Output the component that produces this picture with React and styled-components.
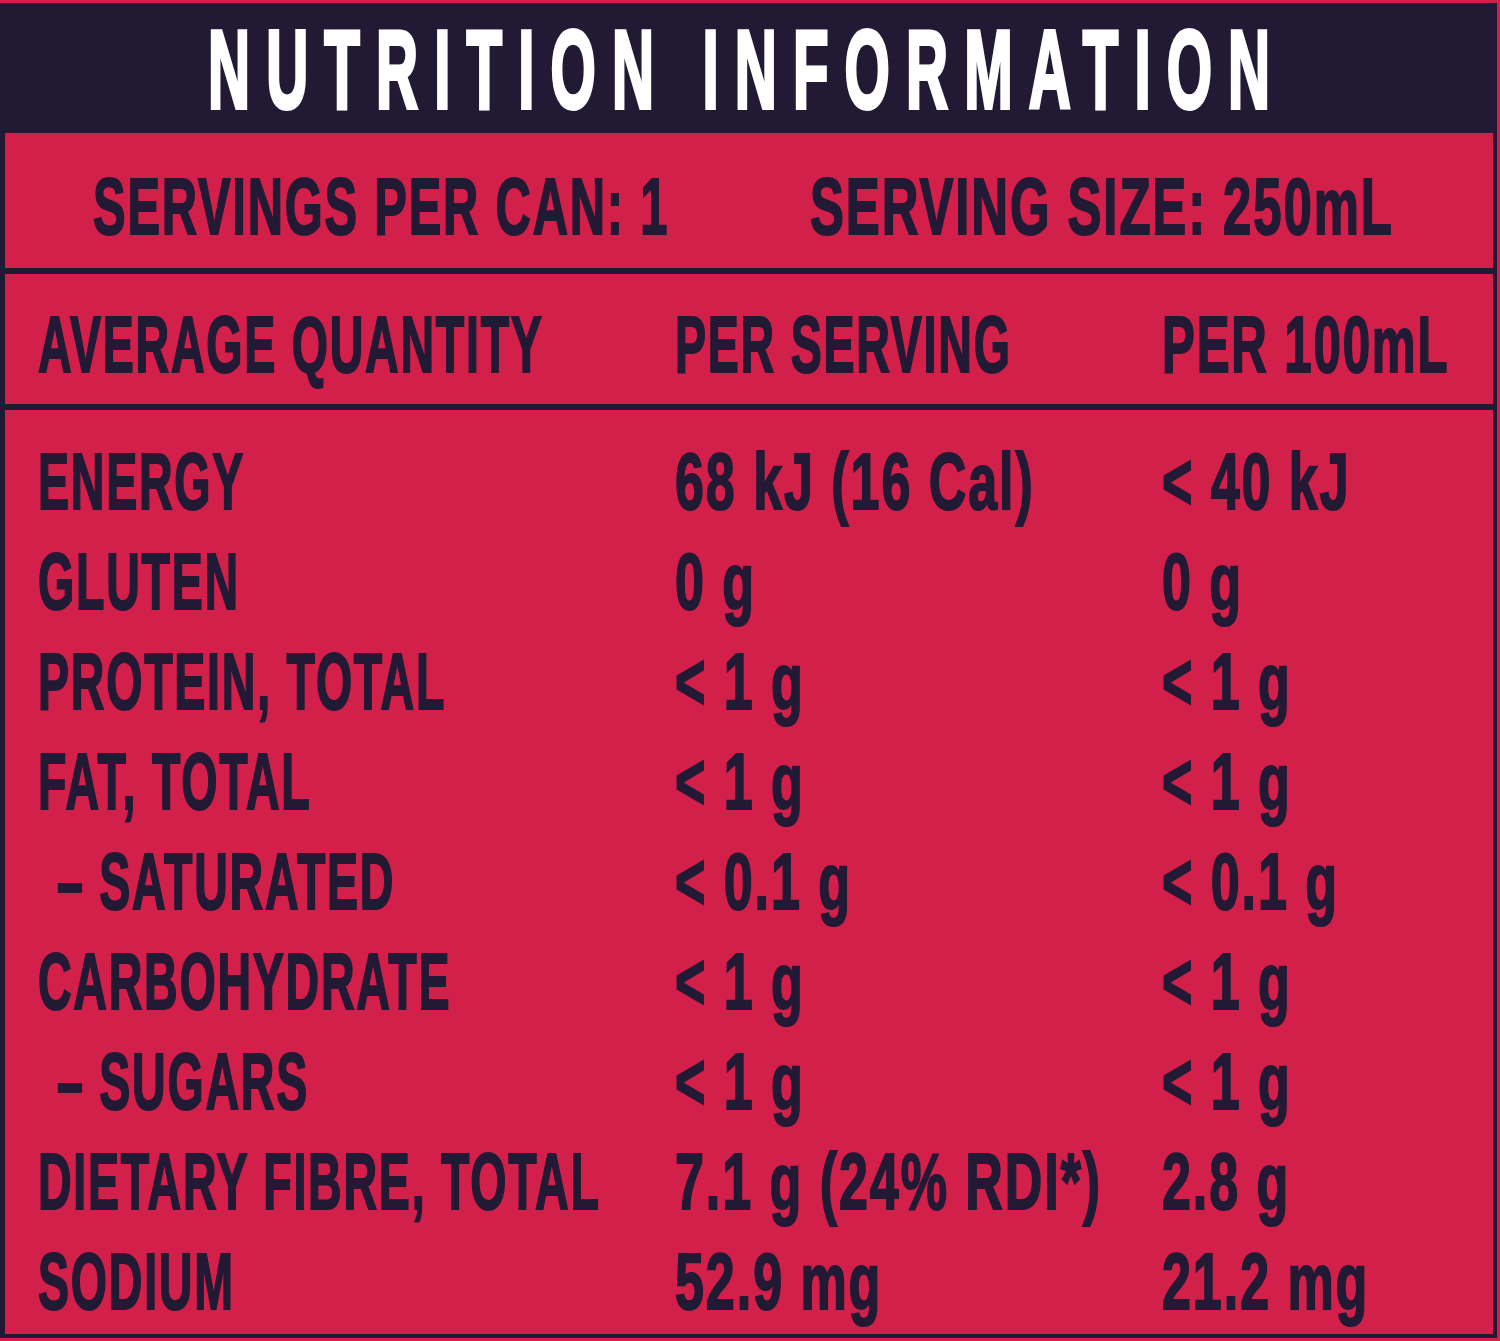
import styled, { createGlobalStyle } from 'styled-components'

const GlobalStyle = createGlobalStyle`
html, body {
  margin: 0;
  padding: 0;
  background: #d2204a;
  overflow: hidden;
}
`

const NAVY = '#221a35'
const RED = '#d2204a'

const rows = [
  { name: 'ENERGY', serving: '68 kJ (16 Cal)', per100: '< 40 kJ' },
  { name: 'GLUTEN', serving: '0 g', per100: '0 g' },
  { name: 'PROTEIN, TOTAL', serving: '< 1 g', per100: '< 1 g' },
  { name: 'FAT, TOTAL', serving: '< 1 g', per100: '< 1 g' },
  { name: '– SATURATED', serving: '< 0.1 g', per100: '< 0.1 g', sub: true },
  { name: 'CARBOHYDRATE', serving: '< 1 g', per100: '< 1 g' },
  { name: '– SUGARS', serving: '< 1 g', per100: '< 1 g', sub: true },
  { name: 'DIETARY FIBRE, TOTAL', serving: '7.1 g (24% RDI*)', per100: '2.8 g' },
  { name: 'SODIUM', serving: '52.9 mg', per100: '21.2 mg' },
]

const App = () => {
  return (
    <>
      <GlobalStyle />
      <Page>
        <Panel>
          <Title>
            <Squeeze $sx={0.52}>NUTRITION INFORMATION</Squeeze>
          </Title>
          <ServingRow>
            <Cell><Squeeze $sx={0.61}>SERVINGS PER CAN: 1</Squeeze></Cell>
            <Cell><Squeeze $sx={0.636}>SERVING SIZE: 250mL</Squeeze></Cell>
          </ServingRow>
          <HeadRow>
            <Cell><Squeeze>AVERAGE QUANTITY</Squeeze></Cell>
            <Cell><Squeeze>PER SERVING</Squeeze></Cell>
            <Cell><Squeeze $sx={0.615}>PER 100mL</Squeeze></Cell>
          </HeadRow>
          <Body>
            {rows.map((row, index) => {
              return (
                <DataRow key={index}>
                  <Cell $indent={row.sub}><Squeeze>{row.name}</Squeeze></Cell>
                  <Cell><Squeeze $sx={0.65}>{row.serving}</Squeeze></Cell>
                  <Cell><Squeeze $sx={0.65}>{row.per100}</Squeeze></Cell>
                </DataRow>
              )
            })}
          </Body>
        </Panel>
      </Page>
    </>
  )
}

const Page = styled.div`
padding: 3px 3px 3px 0;
background: ${RED};
font-family: "Liberation Sans", Arial, sans-serif;
font-weight: 700;
color: ${NAVY};
`

const Panel = styled.div`
border-left: 5px solid ${NAVY};
border-right: 4px solid ${NAVY};
border-bottom: 4px solid ${NAVY};
background: ${RED};
overflow: hidden;
`

const Squeeze = styled.span`
display: inline-block;
white-space: pre;
letter-spacing: 3px;
transform: scaleX(${p => p.$sx || 0.582});
transform-origin: 0 50%;
-webkit-text-stroke: 2px currentColor;
`

const Title = styled.div`
height: 130px;
margin-left: -5px;
padding: 3px 0 0 208px;
box-sizing: border-box;
background: ${NAVY};
color: #ffffff;
font-size: 112px;
line-height: 127px;
white-space: nowrap;
overflow: hidden;

span {
  letter-spacing: 31px;
  -webkit-text-stroke: 4px #ffffff;
}
`

const Cell = styled.div`
white-space: nowrap;
padding-left: ${p => (p.$indent ? '19px' : '0')};
`

const ServingRow = styled.div`
display: grid;
grid-template-columns: 717px 1fr;
padding: 24px 0 11px 88px;
font-size: 80px;
line-height: 100px;
border-bottom: 6px solid ${NAVY};
`

const HeadRow = styled.div`
display: grid;
grid-template-columns: 637px 487px 1fr;
padding: 21px 0 9px 33px;
font-size: 80px;
line-height: 100px;
border-bottom: 6px solid ${NAVY};
`

const Body = styled.div`
padding: 22px 0 2px 33px;
`

const DataRow = styled.div`
display: grid;
grid-template-columns: 637px 487px 1fr;
height: 100px;
font-size: 80px;
line-height: 100px;
`

export default App
